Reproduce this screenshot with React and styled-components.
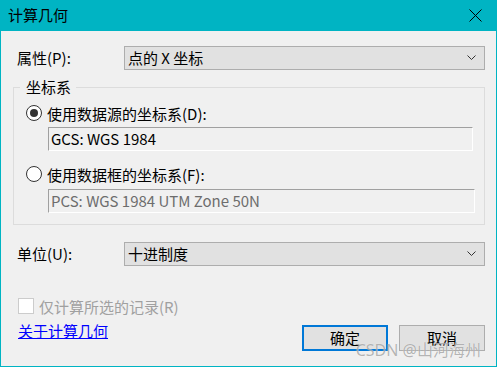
import React from "react";
import styled, { createGlobalStyle } from "styled-components";

const GlobalStyle = createGlobalStyle`
  html, body {
    margin: 0;
    padding: 0;
    background: #f0f0f0;
  }
  body {
    font-family: "Noto Sans CJK SC", "Noto Sans", sans-serif;
    font-size: 15px;
    color: #000;
  }
`;

const Window = styled.div`
  position: relative;
  width: 497px;
  height: 367px;
  box-sizing: border-box;
  border: 1px solid #00b4c3;
  border-top: none;
  background: #f0f0f0;
  display: flex;
  flex-direction: column;
  overflow: hidden;
`;

const TitleBar = styled.div`
  height: 31px;
  margin: 0 -1px;
  background: #00b4c3;
  display: flex;
  align-items: center;
  justify-content: space-between;
  padding: 0 15px 0 8px;

  .title {
    font-size: 15px;
    line-height: 20px;
    margin-top: -1px;
  }
`;

const Body = styled.div`
  flex: 1;
  padding: 15px 10px 0 12px;
  display: flex;
  flex-direction: column;
`;

const FieldRow = styled.div`
  display: flex;
  align-items: center;
  margin-top: ${(p) => p.$top || 0}px;

  .label {
    width: 111px;
    padding-left: 4px;
    box-sizing: border-box;
    line-height: 20px;
  }
`;

const Combo = styled.div`
  width: 361px;
  height: 24px;
  box-sizing: border-box;
  border: 1px solid #adadad;
  background: #e1e1e1;
  display: flex;
  align-items: center;
  justify-content: space-between;
  padding: 0 8px 0 3px;
  line-height: 20px;
`;

const GroupBox = styled.fieldset`
  margin: 8px 1px 0 0;
  padding: 7px 0 11px 12px;
  border: 1px solid #dcdcdc;
  min-width: 0;

  legend {
    margin-left: -6px;
    padding: 0 5px 0 6px;
    line-height: 18px;
  }
`;

const RadioRow = styled.label`
  display: flex;
  align-items: center;
  height: 20px;
  margin-top: ${(p) => p.$top || 0}px;
  gap: 5px;
`;

const RadioMark = styled.span`
  width: 16px;
  height: 16px;
  box-sizing: border-box;
  border: 1px solid #333;
  border-radius: 50%;
  background: #fff;
  display: flex;
  align-items: center;
  justify-content: center;

  &::after {
    content: "";
    width: 8px;
    height: 8px;
    border-radius: 50%;
    background: ${(p) => (p.$checked ? "#333" : "transparent")};
  }
`;

const TextBox = styled.div`
  width: ${(p) => p.$width}px;
  height: 24px;
  box-sizing: border-box;
  margin: ${(p) => p.$top || 4}px 0 0 22px;
  border-top: 1px solid #a0a0a0;
  border-left: 1px solid #a0a0a0;
  border-right: 1px solid #fff;
  border-bottom: 1px solid #fff;
  padding: 0 2px;
  font-size: 15px;
  line-height: 22px;
  color: ${(p) => (p.$disabled ? "#6d6d6d" : "#000")};
`;

const Footer = styled.div`
  display: flex;
  justify-content: space-between;
  align-items: flex-start;
  margin-top: 30px;
`;

const LeftCol = styled.div`
  display: flex;
  flex-direction: column;
  padding-left: 5px;
`;

const CheckRow = styled.label`
  display: flex;
  align-items: center;
  gap: 5px;
  height: 20px;
  color: #a0a0a0;
`;

const CheckMark = styled.span`
  width: 16px;
  height: 16px;
  box-sizing: border-box;
  border: 1px solid #cccccc;
  background: #fff;
`;

const Link = styled.a`
  margin-top: 5px;
  color: #0000ff;
  text-decoration: underline;
  line-height: 20px;
  cursor: pointer;
`;

const Buttons = styled.div`
  display: flex;
  gap: 11px;
  margin-top: 29px;
  margin-right: 1px;
`;

const Button = styled.button`
  width: 86px;
  height: 26px;
  box-sizing: border-box;
  background: #e1e1e1;
  border: ${(p) => (p.$primary ? "2px solid #0078d7" : "1px solid #adadad")};
  font-family: inherit;
  font-size: 15px;
  color: #000;
  padding: 0;
  line-height: 20px;
`;

const Watermark = styled.div`
  position: absolute;
  right: 15px;
  bottom: 7px;
  font-family: "Noto Sans", "Noto Sans CJK SC", sans-serif;
  font-size: 16px;
  line-height: 18px;
  color: rgba(120, 120, 120, 0.55);
  text-shadow: 0 0 1px rgba(255, 255, 255, 0.8);
  pointer-events: none;
`;

function Chevron() {
  return (
    <svg width="9" height="6" viewBox="0 0 9 6">
      <path d="M0.5 0.5 L4.5 4.5 L8.5 0.5" fill="none" stroke="#333" strokeWidth="1" />
    </svg>
  );
}

function CloseIcon() {
  return (
    <svg width="13" height="13" viewBox="0 0 13 13">
      <path d="M0.5 0.5 L12.5 12.5 M12.5 0.5 L0.5 12.5" stroke="#000" strokeWidth="1" />
    </svg>
  );
}

export default function App() {
  return (
    <>
      <GlobalStyle />
      <Window>
        <TitleBar>
          <span className="title">计算几何</span>
          <CloseIcon />
        </TitleBar>
        <Body>
          <FieldRow>
            <span className="label">属性(P):</span>
            <Combo>
              <span>点的 X 坐标</span>
              <Chevron />
            </Combo>
          </FieldRow>

          <GroupBox>
            <legend>坐标系</legend>
            <RadioRow>
              <RadioMark $checked />
              <span>使用数据源的坐标系(D):</span>
            </RadioRow>
            <TextBox $width={425}>GCS: WGS 1984</TextBox>
            <RadioRow $top={13}>
              <RadioMark />
              <span>使用数据框的坐标系(F):</span>
            </RadioRow>
            <TextBox $width={427} $top={5} $disabled>
              PCS: WGS 1984 UTM Zone 50N
            </TextBox>
          </GroupBox>

          <FieldRow $top={17}>
            <span className="label">单位(U):</span>
            <Combo>
              <span>十进制度</span>
              <Chevron />
            </Combo>
          </FieldRow>

          <Footer>
            <LeftCol>
              <CheckRow>
                <CheckMark />
                <span>仅计算所选的记录(R)</span>
              </CheckRow>
              <Link>关于计算几何</Link>
            </LeftCol>
            <Buttons>
              <Button $primary>确定</Button>
              <Button>取消</Button>
            </Buttons>
          </Footer>
        </Body>
        <Watermark>CSDN @山河海州</Watermark>
      </Window>
    </>
  );
}
